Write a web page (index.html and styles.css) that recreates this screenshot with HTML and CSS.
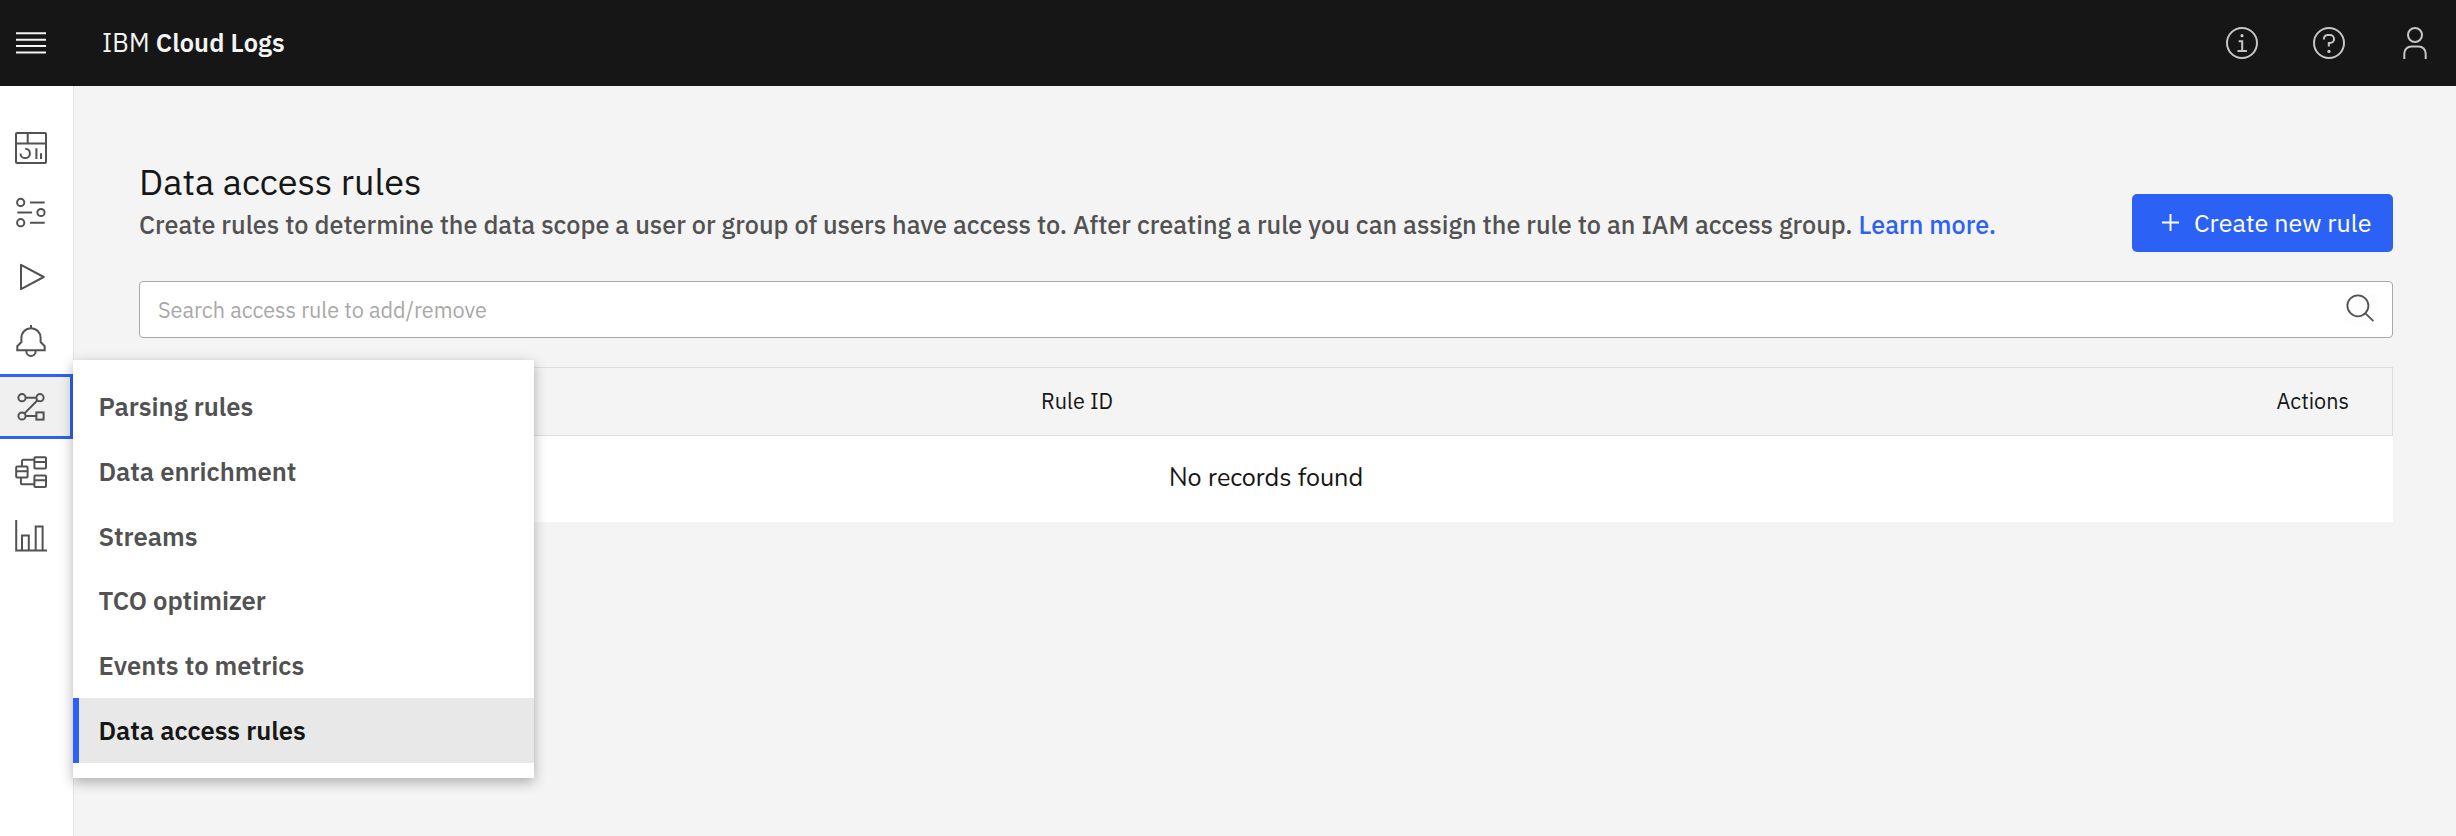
FILE: index.html
```
<!DOCTYPE html>
<html lang="en">
<head>
<meta charset="utf-8">
<title>IBM Cloud Logs</title>
<link rel="stylesheet" href="styles.css">
</head>
<body>
<header class="topbar">
  <svg class="icon menu-icon" viewBox="0 0 36 36"><path d="M3 8.3h30M3 14.7h30M3 21.1h30M3 27.5h30"/></svg>
  <div class="brand">IBM <b>Cloud Logs</b></div>
  <div class="tools">
    <svg class="icon" viewBox="0 0 36 36"><circle cx="18" cy="18" r="15"/><path d="M14.7 16.2h3.5v9.8M13.5 26h9.4"/><circle class="dot" cx="18" cy="10.7" r="1.6"/></svg>
    <svg class="icon" viewBox="0 0 36 36"><circle cx="18" cy="18" r="15"/><path d="M12.9 14.6v-.7a4 4 0 0 1 4-4h2.1a4 4 0 0 1 0 8.1h-1.2v3.6"/><circle class="dot" cx="18" cy="26.4" r="1.7"/></svg>
    <svg class="icon" viewBox="0 0 36 36"><circle cx="18" cy="10" r="7"/><path d="M7.3 34v-5.500a7 7 0 0 1 7-7h7.400a7 7 0 0 1 7 7v5.500"/></svg>
  </div>
</header>
<div class="shell">
  <nav class="rail">
    <a class="rail-item"><svg class="icon" viewBox="0 0 36 36"><rect x="3" y="3" width="30" height="30" rx="1"/><path d="M3 13.600h30M14.700 3v10.600M12.200 18.700a4.700 4.700 0 1 1-4.700 4.700M23.400 18.300v10.700M28 23.300v5.700"/></svg></a>
    <a class="rail-item"><svg class="icon" viewBox="0 0.3 36 36"><circle cx="7.700" cy="7.700" r="3.600"/><circle cx="28" cy="17.800" r="3.600"/><circle cx="7.700" cy="28" r="3.600"/><path d="M17 7.700h14.700M4.300 17.800h14.700M17 28h14.700"/></svg></a>
    <a class="rail-item"><svg class="icon" viewBox="0 0 36 36"><path stroke-linejoin="round" d="M8 5.800v24.400L30.800 18z"/></svg></a>
    <a class="rail-item"><svg class="icon" viewBox="0 1 36 36"><path d="M18 2v3.300M4.300 27.300v-4.100L8.400 19v-4.200a9.600 9.600 0 0 1 19.200 0V19l4.100 4.200v4.100zM13.300 27.300v1a4.700 4.700 0 0 0 9.400 0v-1"/></svg></a>
    <a class="rail-item selected"><svg class="icon" viewBox="0 0 36 36"><circle cx="9" cy="8.700" r="3.600"/><circle cx="27" cy="8.700" r="3.600"/><circle cx="9" cy="27" r="3.600"/><rect x="23.400" y="23.400" width="7.200" height="7.200"/><path d="M12.600 8.700h10.800M12.600 27h10.800M24.500 11.300 11.500 24.400"/></svg></a>
    <a class="rail-item"><svg class="icon" viewBox="0 0 36 36"><rect x="3.200" y="12.600" width="11.400" height="11" rx="1"/><rect x="21.400" y="3.200" width="11.600" height="11.400" rx="1"/><rect x="21.400" y="21.500" width="11.600" height="11.400" rx="1"/><path d="M3.200 17.200h11.400M21.400 8h11.600M21.400 26.300h11.600M9 12.600V7a1.200 1.200 0 0 1 1.200-1.200h11.200M7.900 23.600v5.500a1.200 1.200 0 0 0 1.200 1.200h12.300"/></svg></a>
    <a class="rail-item"><svg class="icon" viewBox="0 0 36 36"><path d="M3.200 2v30.600H34M9 32.600V17.500h6.800v15.100M22.700 32.600V8.400h6.900v24.200"/></svg></a>
  </nav>
  <main class="page">
    <div class="intro">
      <div>
        <h1 class="title">Data access rules</h1>
        <p class="lead">Create rules to determine the data scope a user or group of users have access to. After creating a rule you can assign the rule to an IAM access group. <a class="link">Learn more.</a></p>
      </div>
      <button class="create"><svg class="plus" viewBox="0 0 16 16"><path d="M8 0v16M0 8h16"/></svg>Create new rule</button>
    </div>
    <div class="search">
      <span>Search access rule to add/remove</span>
      <svg class="find" viewBox="0 0 32 32"><circle cx="12.900" cy="12.800" r="10.500"/><path d="m20.400 20.300 8 7.900"/></svg>
    </div>
    <div class="table">
      <div class="table-head"><span>Rule ID</span><span>Actions</span></div>
      <div class="empty">No records found</div>
    </div>
  </main>
  <div class="flyout">
    <a class="entry">Parsing rules</a>
    <a class="entry">Data enrichment</a>
    <a class="entry">Streams</a>
    <a class="entry">TCO optimizer</a>
    <a class="entry">Events to metrics</a>
    <a class="entry current">Data access rules</a>
  </div>
</div>
</body>
</html>
```
FILE: styles.css
```
* { box-sizing: border-box; }

body {
  margin: 0;
  height: 836px;
  display: flex;
  flex-direction: column;
  overflow: hidden;
  background: #f4f4f4;
  color: #161616;
  font-family: "IBM Plex Sans", Roboto, sans-serif;
}

.icon {
  width: 36px;
  height: 36px;
  flex: none;
  fill: none;
  stroke: #525252;
  stroke-width: 2;
}

.topbar {
  height: 86px;
  flex: none;
  display: flex;
  align-items: center;
  padding: 0 23px 0 13px;
  background: #161616;
}
.topbar .icon { stroke: #c6c6c6; }
.topbar .menu-icon { stroke: #f4f4f4; }
.topbar .dot { fill: #c6c6c6; stroke: none; }

.brand {
  margin-left: 53px;
  color: #f4f4f4;
  font-size: 25.4px;
  line-height: 36px;
  letter-spacing: 0.1px;
}
.brand b { font-weight: 600; }

.tools {
  margin-left: auto;
  display: flex;
  gap: 50.5px;
}

.shell {
  position: relative;
  flex: 1;
  display: flex;
}

.rail {
  width: 74px;
  flex: none;
  padding-top: 29px;
  background: #fff;
  border-right: 1px solid #e0e0e0;
}
.rail-item {
  height: 64.75px;
  display: flex;
  align-items: center;
  padding: 0.8px 0 0 13px;
}
.rail-item.selected {
  background: #f0f0f0;
  border: 3px solid #2c61f5;
  border-left: 0;
}

.page {
  flex: 1;
  padding: 75px 63px 0 65px;
}

.intro {
  display: flex;
  justify-content: space-between;
}
.title {
  margin: 0;
  font-size: 36px;
  line-height: 42px;
  font-weight: 400;
}
.lead {
  margin: 1px 0 0;
  color: #525252;
  font-size: 25.22px;
  line-height: 42px;
  font-weight: 500;
  white-space: nowrap;
}
.link { color: #2c61f5; }

.create {
  height: 58px;
  width: 261px;
  margin-top: 33px;
  padding: 0 0 2px 30px;
  display: flex;
  align-items: center;
  gap: 15px;
  border: 0;
  border-radius: 5px;
  background: #2c61f5;
  color: #fff;
  font: 400 25.1px "IBM Plex Sans", Roboto, sans-serif;
}
.plus {
  width: 17px;
  height: 17px;
  stroke: #fff;
  stroke-width: 1.8;
}

.search {
  height: 57px;
  margin-top: 29px;
  padding: 0 15px 0 18px;
  display: flex;
  align-items: center;
  justify-content: space-between;
  background: #fff;
  border: 1px solid #a8a8ad;
  border-radius: 4px;
  color: #a8a8a8;
  font-size: 21.65px;
}
.find {
  width: 32px;
  height: 32px;
  margin-bottom: 1px;
  background: #fdfdfd;
  fill: none;
  stroke: #525252;
  stroke-width: 1.8;
}

.table { margin-top: 29px; }
.table-head {
  height: 69px;
  display: flex;
  align-items: center;
  justify-content: space-between;
  padding: 0 43px 2px 901px;
  border: 1px solid #dcdee0;
  font-size: 21.6px;
}
.empty {
  height: 86px;
  display: flex;
  align-items: center;
  justify-content: center;
  padding-bottom: 2px;
  background: #fff;
  font-family: Nunito, "Nunito Sans", "IBM Plex Sans", Roboto, sans-serif;
  font-size: 25.2px;
}

.flyout {
  position: absolute;
  left: 73px;
  top: 274px;
  width: 461px;
  height: 418px;
  padding-top: 14px;
  background: #fff;
  box-shadow: 0 4px 12px rgba(0, 0, 0, 0.3);
}
.entry {
  height: 64.8px;
  display: flex;
  align-items: center;
  padding: 0.4px 0 0 25.4px;
  color: #525252;
  font-size: 25.6px;
  font-weight: 600;
}
.entry.current {
  padding-left: 19.4px;
  border-left: 6px solid #2c61f5;
  background: #e8e8e8;
  color: #161616;
}
```
